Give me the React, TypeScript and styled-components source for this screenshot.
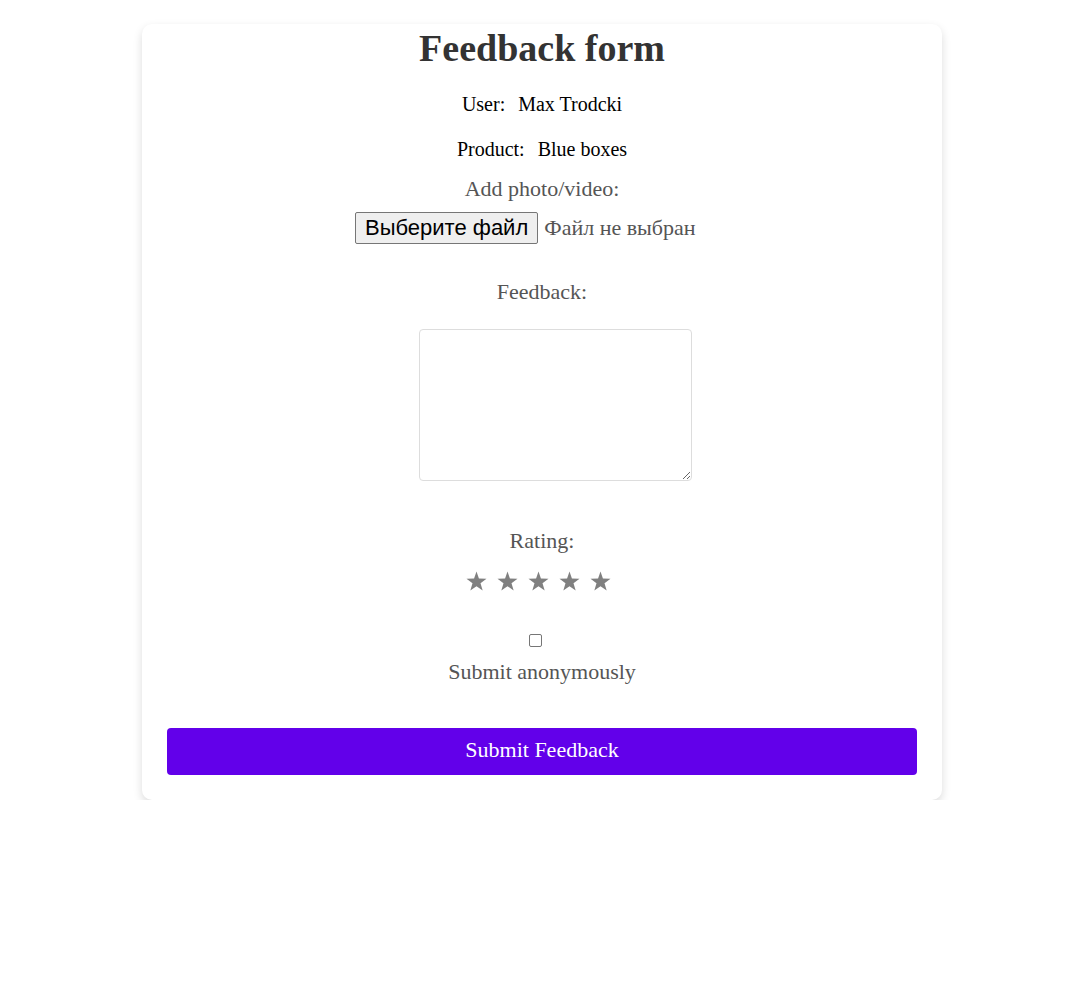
import React, { useState } from "react";
import styled, { createGlobalStyle } from "styled-components";

const GlobalStyle = createGlobalStyle`
  html, body {
    margin: 0;
    padding: 0;
    background: #ffffff;
    font-family: "Liberation Serif", "Times New Roman", serif;
  }
`;

const Card = styled.form`
  box-sizing: border-box;
  width: 800px;
  margin: 24px auto 0;
  padding: 2px 25px 25px;
  background: #ffffff;
  border-radius: 10px;
  box-shadow: 0 4px 10px rgba(0, 0, 0, 0.14);
  display: flex;
  flex-direction: column;
  align-items: center;
`;

const Title = styled.h1`
  margin: 0;
  font-size: 38px;
  font-weight: bold;
  color: #333333;
  line-height: 44px;
`;

const InfoRow = styled.div<{ $top: number }>`
  display: flex;
  align-items: baseline;
  gap: 13px;
  margin-top: ${(p) => p.$top}px;
  font-size: 20px;
  line-height: 23px;
  color: #000000;
`;

const FieldLabel = styled.label<{ $top: number }>`
  display: block;
  margin-top: ${(p) => p.$top}px;
  font-size: 22px;
  line-height: 25px;
  color: #555555;
`;

const FilePicker = styled.label`
  box-sizing: border-box;
  width: 374px;
  margin-top: 11px;
  display: flex;
  align-items: center;
  gap: 6px;
  cursor: pointer;
`;

const HiddenInput = styled.input`
  position: absolute;
  width: 1px;
  height: 1px;
  opacity: 0;
  pointer-events: none;
`;

const FileButton = styled.span`
  box-sizing: border-box;
  height: 32px;
  padding: 0 9px;
  display: inline-flex;
  align-items: center;
  font-family: "Liberation Sans", Arial, sans-serif;
  font-size: 22px;
  color: #000000;
  background: #efefef;
  border: 1px solid #767676;
  border-radius: 2px;
`;

const FileStatus = styled.span`
  font-size: 22px;
  color: #555555;
`;

const TextArea = styled.textarea`
  box-sizing: border-box;
  width: 273px;
  height: 152px;
  margin: 25px 0 0 27px;
  padding: 8px;
  border: 1px solid #dddddd;
  border-radius: 4px;
  font-family: "Liberation Serif", serif;
  font-size: 16px;
  outline: none;
`;

const Stars = styled.div`
  display: flex;
  gap: 10px;
  padding-right: 8px;
  margin-top: 17px;
`;

const StarButton = styled.button`
  width: 21px;
  height: 21px;
  padding: 0;
  border: none;
  background: none;
  display: flex;
  align-items: center;
  justify-content: center;
  cursor: pointer;
`;

const Check = styled.input`
  appearance: none;
  box-sizing: border-box;
  width: 13px;
  height: 13px;
  margin: 43px 14px 0 0;
  border: 1px solid #767676;
  border-radius: 2px;
  background: #ffffff;
  cursor: pointer;
  &:checked {
    background: #0075ff;
    border-color: #0075ff;
  }
`;

const SubmitButton = styled.button`
  width: 100%;
  height: 47px;
  margin-top: 44px;
  padding: 0 0 3px;
  border: none;
  border-radius: 4px;
  background: #6200ea;
  color: #ffffff;
  font-family: "Liberation Serif", "Times New Roman", serif;
  font-size: 22px;
  cursor: pointer;
`;

const Star: React.FC<{ color: string }> = ({ color }) => (
  <svg width="21" height="20" viewBox="0 0 24 23">
    <polygon
      points="12,0.5 14.8,8.6 23.5,8.8 16.6,14 19.1,22.4 12,17.4 4.9,22.4 7.4,14 0.5,8.8 9.2,8.6"
      fill={color}
    />
  </svg>
);

export default function App() {
  const [rating, setRating] = useState(0);
  return (
    <>
      <GlobalStyle />
      <Card onSubmit={(e) => e.preventDefault()}>
        <Title>Feedback form</Title>
        <InfoRow $top={23}>
          <span>User:</span>
          <span>Max Trodcki</span>
        </InfoRow>
        <InfoRow $top={22}>
          <span>Product:</span>
          <span>Blue boxes</span>
        </InfoRow>
        <FieldLabel $top={15}>Add photo/video:</FieldLabel>
        <FilePicker>
          <HiddenInput type="file" accept="image/*,video/*" />
          <FileButton>Выберите файл</FileButton>
          <FileStatus>Файл не выбран</FileStatus>
        </FilePicker>
        <FieldLabel $top={35}>Feedback:</FieldLabel>
        <TextArea />
        <FieldLabel $top={47}>Rating:</FieldLabel>
        <Stars>
          {[1, 2, 3, 4, 5].map((n) => (
            <StarButton type="button" key={n} onClick={() => setRating(n)}>
              <Star color={n <= rating ? "#f5b301" : "#808080"} />
            </StarButton>
          ))}
        </Stars>
        <Check type="checkbox" id="anon" />
        <FieldLabel $top={12} htmlFor="anon">
          Submit anonymously
        </FieldLabel>
        <SubmitButton type="submit">Submit Feedback</SubmitButton>
      </Card>
    </>
  );
}
